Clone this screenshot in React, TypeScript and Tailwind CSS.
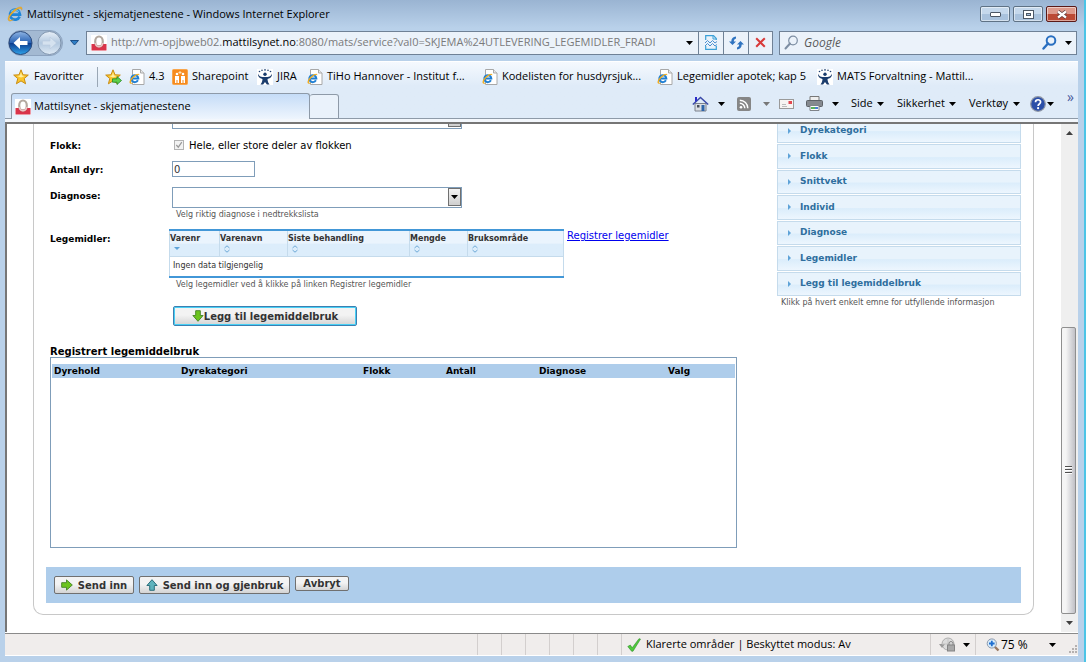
import React from "react";

const ui = "font-['Open_Sans','Noto_Sans',sans-serif]";

function Caret({ className = "text-black" }: { className?: string }) {
  return (
    <svg width="7" height="4" viewBox="0 0 7 4" className={`shrink-0 ${className}`} aria-hidden="true">
      <path d="M0 0h7L3.5 4z" fill="currentColor" />
    </svg>
  );
}

function Explorer() {
  return (
    <svg width="16" height="16" viewBox="0 0 16 16" aria-hidden="true" className="shrink-0">
      <path d="M12.6 10.6A5 5 0 1 1 13 8.6H4.2" fill="none" stroke="#1f86d8" strokeWidth="2.7" />
      <path d="M4 5.6A5 5 0 0 1 12 6" fill="none" stroke="#6cc0f2" strokeWidth="1.2" />
      <path d="M1.600 14.600C-.8 12 4.500 5 10 2c4-2 6-1 4.600 2.200C15 2 12.500 2 9.500 4 4.500 7.200 1 12.600 2.600 14c1 .8 2.800 0 4-.7-2 1.600-4 2.300-5 1.300z" fill="#f3b323" stroke="#d8921a" strokeWidth=".4" />
    </svg>
  );
}

function PageIcon() {
  return (
    <svg width="16" height="16" viewBox="0 0 16 16" aria-hidden="true" className="shrink-0">
      <path d="M3.500.5h8l3.500 3.500v11.500H3.500z" fill="#fff" stroke="#a8a8a8" />
      <path d="M11.500.5V4H15" fill="#e8e8e8" stroke="#a8a8a8" />
      <path d="M8.900 11.300A3.500 3.500 0 1 1 9.300 9.400H3" fill="none" stroke="#1f7fd4" strokeWidth="2" />
      <path d="M.8 14.300C-.6 12 3.500 7 7 5.300c2.600-1.300 3.900-.6 3 1.400 0-1.200-1.400-1-3 0C4 8.400 1.300 12.400 2 13.600c.5.800 1.700.3 2.500-.1-1.300 1.100-3 1.700-3.700.8z" fill="#f0ab1c" />
    </svg>
  );
}

function Padlock() {
  return (
    <svg width="16" height="16" viewBox="0 0 16 16" aria-hidden="true" className="shrink-0">
      <path d="M0 0h16v16H0z" fill="#fff" />
      <path d="M.5 9h4a4 3.500 0 0 0 7 0h4v6.500H.5z" fill="#d9344a" />
      <ellipse cx="8" cy="6.500" rx="3.800" ry="5" fill="none" stroke="#b3a9a0" strokeWidth="2.200" />
      <path d="M4.300 8c.5 3 2 3.700 3.700 3.700s3.200-.7 3.700-3.700" fill="none" stroke="#f0c4c4" strokeWidth="1.500" />
    </svg>
  );
}

function Star({ arrow = false }: { arrow?: boolean }) {
  return (
    <svg width="17" height="16" viewBox="0 0 17 16" aria-hidden="true" className="shrink-0">
      <path d="M8 .8l2 5 5.300.3-4.100 3.400 1.400 5.300L8 11.900l-4.600 2.900 1.400-5.300L.7 6.100 6 5.800z" fill="#fbc62d" stroke="#c98d14" strokeLinejoin="round" />
      <path d="M8 3l1 3.500 3 .4-4 1.600-4-1.600 3-.4z" fill="#fff0a0" />
      {arrow && <path d="M7.500 9.800H12V7.500l4.500 4-4.500 4v-2.300H7.500z" fill="#5fd04a" stroke="#23872a" strokeWidth=".8" />}
    </svg>
  );
}

function Sharepoint() {
  return (
    <svg width="16" height="16" viewBox="0 0 16 16" aria-hidden="true" className="shrink-0">
      <rect x=".5" y=".5" width="15" height="15" rx="1" fill="#f68b1f" stroke="#f8a64d" />
      <path d="M3 7h4v7H5.500v-3h-1v3H3zM9 7h4v7h-1.500v-3h-1v3H9z" fill="#fff" />
      <circle cx="5" cy="5" r="1.300" fill="#fff" />
      <circle cx="11" cy="5" r="1.300" fill="#fff" />
      <path d="M8 2v3M6.500 3.500h3" stroke="#ffe1b8" />
    </svg>
  );
}

function Jira() {
  return (
    <svg width="16" height="16" viewBox="0 0 16 16" aria-hidden="true" className="shrink-0">
      <path d="M0 0h16v16H0z" fill="#fff" />
      <g fill="#1b3d6d">
        <circle cx="8" cy="5.200" r="1.700" />
        <path d="M1 4.500c1 3 3 3.500 7 3.500s6-.5 7-3.500c.3 3-1.500 5-4.500 5.500.2 2.500.8 4 2 5.500h-2.600L8 13l-1.900 2.500H3.500c1.200-1.500 1.800-3 2-5.500C2.500 9.500.7 7.500 1 4.500z" />
        <circle cx="2.500" cy="2.500" r=".8" />
        <circle cx="5" cy="1.200" r=".8" />
        <circle cx="8" cy=".9" r=".8" />
        <circle cx="11" cy="1.200" r=".8" />
        <circle cx="13.500" cy="2.500" r=".8" />
      </g>
    </svg>
  );
}

function Magnifier({ className, thin = false }: { className: string; thin?: boolean }) {
  return (
    <svg width="15" height="15" viewBox="0 0 15 15" aria-hidden="true" className={className}>
      <g fill="none" stroke="currentColor">
        <circle cx="9" cy="5.500" r="4.300" strokeWidth={thin ? 1.2 : 2} />
        <path d="M6 8.500L1.500 13.500" strokeWidth={thin ? 2 : 2.4} strokeLinecap="round" />
      </g>
    </svg>
  );
}

function TitleBar() {
  const btn = "flex h-4 items-center justify-center rounded-[2px] border shadow-[inset_0_0_0_1px_rgba(255,255,255,.5)]";
  const blue = "w-[30px] border-[#5f7285] bg-linear-to-b from-[#c5d8ec] from-50% to-[#a9c2dd] to-50%";
  return (
    <header className="flex h-7 shrink-0 items-center pr-px pl-[2px]">
      <Explorer />
      <h1 className="ml-1 flex-1 text-[11px] text-black">Mattilsynet - skjematjenestene - Windows Internet Explorer</h1>
      <div className="flex gap-[3px]">
        <button aria-label="Minimer" className={`${btn} ${blue}`}>
          <svg width="11" height="5" viewBox="0 0 11 5"><rect x=".5" y=".5" width="10" height="4" rx=".5" fill="#fff" stroke="#4c5765" /></svg>
        </button>
        <button aria-label="Maksimer" className={`${btn} ${blue}`}>
          <svg width="11" height="9" viewBox="0 0 11 9"><rect x=".5" y=".5" width="10" height="8" fill="#fff" stroke="#4c5765" /><rect x="3.500" y="3.500" width="4" height="2" fill="#a9c2dd" stroke="#4c5765" /></svg>
        </button>
        <button aria-label="Lukk" className={`${btn} w-[31px] border-[#5a1a18] bg-linear-to-b from-[#dd9a8c] from-50% to-[#bb4a35] to-50%`}>
          <svg width="12" height="9" viewBox="0 0 12 9"><path d="M2 1.500l8 6M10 1.500l-8 6" stroke="#5c3a3a" strokeWidth="3.800" /><path d="M2 1.500l8 6M10 1.500l-8 6" stroke="#fff" strokeWidth="2.200" /></svg>
        </button>
      </div>
    </header>
  );
}

function NavBar() {
  return (
    <nav className="flex h-[33px] shrink-0 items-center pr-px pb-1 pl-[3px]">
      <svg width="55" height="28" viewBox="0 0 55 28" className="shrink-0" aria-hidden="true">
        <defs>
          <linearGradient id="back" x1="0" y1="0" x2="0" y2="1">
            <stop offset="0" stopColor="#8fb5e4" />
            <stop offset=".48" stopColor="#2a63b4" />
            <stop offset=".5" stopColor="#0b3a8c" />
            <stop offset="1" stopColor="#2fa3ea" />
          </linearGradient>
          <linearGradient id="fwd" x1="0" y1="0" x2="0" y2="1">
            <stop offset="0" stopColor="#e9f0f8" />
            <stop offset=".5" stopColor="#b2c8df" />
            <stop offset="1" stopColor="#dfeaf5" />
          </linearGradient>
        </defs>
        <path d="M13 1.500h29a12.500 12.500 0 0 1 0 25H13a12.500 12.500 0 0 1 0-25z" fill="#a3b9d2" stroke="#8da3bf" />
        <circle cx="12.500" cy="14" r="11.500" fill="url(#back)" stroke="#2b4a7c" />
        <circle cx="41.500" cy="14" r="11.500" fill="url(#fwd)" stroke="#7e93ad" />
        <path d="M5.500 14L12 8v4h7.500v4H12v4z" fill="#fff" />
        <path d="M48.500 14L42 8v4h-7.500v4H42v4z" fill="#d5e2ef" stroke="#b8cade" strokeWidth=".6" />
      </svg>
      <button aria-label="Nylige sider" className="flex w-[23px] shrink-0 justify-center">
        <svg width="9" height="6" viewBox="0 0 9 6"><path d="M.5.5h8L4.500 5z" fill="#2f7fc6" stroke="#1b4d86" /></svg>
      </button>
      <div className="flex h-6 min-w-0 flex-1 border border-[#6f8196] bg-[#ebf2fa]">
        <div className="flex min-w-0 flex-1 items-center pr-[5px] pl-1">
          <Padlock />
          <p className="ml-1 min-w-0 flex-1 overflow-hidden text-[11px] whitespace-nowrap text-[#7a7a7a]">
            http://vm-opjbweb02.<span className="text-black">mattilsynet.no</span>:8080/mats/service?val0=SKJEMA%24UTLEVERING_LEGEMIDLER_FRADI
          </p>
          <span className="w-2" />
          <Caret />
        </div>
        <button aria-label="Kompatibilitetsvisning" className="flex w-[25px] shrink-0 items-center justify-center border-l border-[#6f8196]">
          <svg width="12" height="15" viewBox="0 0 12 15"><path d="M.7 5V.7h7.800l2.800 2.800V5M.7 11v3.300h10.600V11" fill="none" stroke="#3aa0d8" strokeWidth="1.200" /><path d="M8 1v3h3" fill="none" stroke="#3aa0d8" /><path d="M0 8l2.500-2.500L5 8l2.500-2.500L10 8l2-1.500M0 11l2.500-2.500L5 11l2.500-2.500L10 11l2-1.500" fill="none" stroke="#4a8fd0" /></svg>
        </button>
        <button aria-label="Oppdater" className="flex w-[25px] shrink-0 items-center justify-center border-l border-[#6f8196]">
          <svg width="15" height="14" viewBox="0 0 15 14" fill="#2f73c0"><path d="M0 5.500L3.500 9 7 5.500H4.800C4.800 3.800 5.600 3 7 2.500V.5C4 .8 2.300 2.500 2.300 5.500z" /><path d="M15 8.500L11.500 5 8 8.500h2.200c0 1.700-.8 2.500-2.200 3v2c3-.3 4.700-2 4.700-5z" /></svg>
        </button>
        <button aria-label="Stopp" className="flex w-6 shrink-0 items-center justify-center border-l border-[#6f8196]">
          <svg width="11" height="11" viewBox="0 0 11 11"><path d="M1.200 1.200l8.600 8.600M9.800 1.200L1.200 9.800" stroke="#d83a3a" strokeWidth="2" /></svg>
        </button>
      </div>
      <div className="ml-[6px] flex h-6 w-[298px] shrink-0 items-center border border-[#6f8196] bg-[#ebf2fa] pr-1 pl-1">
        <Magnifier thin className="shrink-0 text-[#7d8ea3]" />
        <input aria-label="Søk" placeholder="Google" className="ml-[5px] min-w-0 flex-1 bg-transparent text-xs italic outline-none placeholder:text-[#5a5a5a]" />
        <button aria-label="Søk nå"><Magnifier className="text-[#2a6fc0]" /></button>
        <span className="w-2" />
        <Caret />
      </div>
    </nav>
  );
}

const favourites = [
  { label: "4.3", icon: <PageIcon />, width: "w-[43px]" },
  { label: "Sharepoint", icon: <Sharepoint />, width: "w-[85px]" },
  { label: "JIRA", icon: <Jira />, width: "w-[50px]" },
  { label: "TiHo Hannover - Institut f...", icon: <PageIcon />, width: "w-[175px]" },
  { label: "Kodelisten for husdyrsjuk...", icon: <PageIcon />, width: "w-[175px]" },
  { label: "Legemidler apotek; kap 5", icon: <PageIcon />, width: "w-[160px]" },
  { label: "MATS Forvaltning - Mattil...", icon: <Jira />, width: "w-[170px]" },
];

function Favourites() {
  return (
    <div className="flex h-[29px] shrink-0 items-center pl-2 text-[11px] whitespace-nowrap">
      <button className="flex w-[84px] items-center gap-1"><Star />Favoritter</button>
      <span className="h-5 w-px bg-[#9aa7b5]" />
      <button aria-label="Legg til i favoritter" className="ml-[7px] w-6"><Star arrow /></button>
      {favourites.map((f) => (
        <a key={f.label} href="#" className={`flex shrink-0 items-center gap-1 ${f.width}`}>{f.icon}{f.label}</a>
      ))}
    </div>
  );
}

function Commands() {
  return (
    <div className="flex flex-1 items-center justify-end border-b border-[#8e9aa8] pr-1 pb-[2px] text-[11px]">
      <button aria-label="Hjem" className="flex w-[45px] items-center gap-[9px]">
        <svg width="17" height="16" viewBox="0 0 17 16"><path d="M3 7.500h11V15H3z" fill="#d9dde3" stroke="#7c828c" /><path d="M.8 8.500L8.500 1.500l7.700 7" fill="none" stroke="#3a49a8" strokeWidth="1.500" /><path d="M3 1h2v3.500L3 6z" fill="#2b2bc8" /><path d="M9.500 9h3v6h-3z" fill="#2e64a8" /><path d="M5 9h2.500v2.500H5z" fill="#444c58" /></svg>
        <Caret />
      </button>
      <button aria-label="Feeder" className="flex w-[42px] items-center gap-3">
        <svg width="14" height="14" viewBox="0 0 14 14"><rect width="14" height="14" rx="2" fill="#868686" /><circle cx="4" cy="10.200" r="1.300" fill="#fff" /><path d="M2.800 6.200a5 5 0 0 1 5 5M2.800 3.200a8 8 0 0 1 8 8" fill="none" stroke="#fff" strokeWidth="1.400" /></svg>
        <Caret className="text-[#777]" />
      </button>
      <button aria-label="Les e-post" className="w-[27px]">
        <svg width="15" height="10" viewBox="0 0 15 10"><rect x=".5" y=".5" width="14" height="9" fill="#f7f4f2" stroke="#9a9a9a" /><path d="M9.500 2h3.500v3H9.500z" fill="#e2474f" /><path d="M3 5.500h4M3 7.500h5" stroke="#bbb" /></svg>
      </button>
      <button aria-label="Skriv ut" className="flex w-[45px] items-center gap-[9px]">
        <svg width="17" height="15" viewBox="0 0 17 15"><path d="M4 .5h9V5H4z" fill="#eee" stroke="#777" /><rect x=".5" y="4.500" width="16" height="6" rx="1" fill="#85898f" stroke="#5d6167" /><path d="M4 9.500h9v5H4z" fill="#fff" stroke="#7f8389" /><path d="M5 11h4v2H5z" fill="#58b25c" /><path d="M9 11h3v2H9z" fill="#4b7fd1" /></svg>
        <Caret />
      </button>
      <button className="flex w-[46px] items-center justify-between pr-[13px]">Side<Caret /></button>
      <button className="flex w-[72px] items-center justify-between pr-[13px]">Sikkerhet<Caret /></button>
      <button className="flex w-[61px] items-center justify-between pr-[10px]">Verktøy<Caret /></button>
      <button aria-label="Hjelp" className="flex w-[37px] items-center gap-px">
        <svg width="16" height="16" viewBox="0 0 16 16"><circle cx="8" cy="8" r="7.300" fill="#2b4fa8" stroke="#8f97a6" strokeWidth="1.200" /><path d="M5.500 6.200C5.500 3 10.600 3 10.600 6c0 2-2.500 1.900-2.500 3.900" fill="none" stroke="#fff" strokeWidth="1.700" /><circle cx="8.100" cy="12.200" r="1.100" fill="#fff" /></svg>
        <Caret />
      </button>
      <button aria-label="Flere verktøy" className="self-start text-sm leading-[12px] text-[#4a5a9c]">»</button>
    </div>
  );
}

function Tabs() {
  return (
    <div className="flex h-7 shrink-0">
      <div className="w-[6px] border-b border-[#8e9aa8]" />
      <a href="#" className="mt-[2px] flex w-[299px] items-center gap-[3px] rounded-t-[3px] border border-b-0 border-[#8e9aa8] bg-linear-to-b from-[#c5dcf7] to-[#eef5fd] pl-[3px] text-[11px]">
        <Padlock />
        Mattilsynet - skjematjenestene
      </a>
      <button aria-label="Ny fane" className="mt-[3px] w-[29px] rounded-t-[3px] border border-l-0 border-[#8e9aa8] bg-[#eaf2fb]" />
      <Commands />
    </div>
  );
}

const labelCls = "w-[122px] shrink-0 text-[9px] font-bold text-black";
const hintCls = "text-[8px] leading-[14px] text-[#555]";

function DropDown({ id, label }: { id: string; label: string }) {
  return (
    <div className="relative h-[21px] w-[290px] shrink-0">
      <select id={id} aria-label={label} className="block h-full w-full appearance-none rounded-none border border-[#7f9db9] bg-white px-1 text-[10px]">
        <option></option>
      </select>
      <span className="pointer-events-none absolute top-px right-px flex h-[18px] w-[13px] items-center justify-center border border-[#707070] bg-linear-to-b from-[#f4f4f4] to-[#cfcfcf]">
        <Caret />
      </span>
    </div>
  );
}

function SortMark({ down = false }: { down?: boolean }) {
  return (
    <svg width="6" height="8" viewBox="0 0 6 8" className="ml-1 block" aria-hidden="true">
      {down ? (
        <path d="M0 2h6L3 5z" fill="#5fa3d8" />
      ) : (
        <path d="M.5 3L3 .8 5.500 3M.5 5L3 7.200 5.500 5" fill="none" stroke="#6da8d6" />
      )}
    </svg>
  );
}

const medColumns = [
  { name: "Varenr", width: "w-[50px]" },
  { name: "Varenavn", width: "w-[68px]" },
  { name: "Siste behandling", width: "w-[122px]" },
  { name: "Mengde", width: "w-[58px]" },
  { name: "Bruksområde", width: "w-[96px]" },
];

function MedicineTable() {
  return (
    <table className="w-[394px] table-fixed border-collapse border-y-2 border-[#4297d7]">
      <thead>
        <tr className="bg-linear-to-b from-[#eaf4fd] from-50% to-[#dcedfb] to-55%">
          {medColumns.map((c, i) => (
            <th key={c.name} className={`h-[26px] border border-t-0 border-[#c5dbec] p-0 pt-px text-left align-top text-[8px] leading-[13px] text-[#333] ${c.width}`}>
              {c.name}
              <SortMark down={i === 0} />
            </th>
          ))}
        </tr>
      </thead>
      <tbody>
        <tr>
          <td colSpan={5} className="h-[21px] border-x border-[#c5dbec] pl-[3px] text-[8px] leading-[14px] text-[#333]">Ingen data tilgjengelig</td>
        </tr>
      </tbody>
    </table>
  );
}

function Arrow({ dir }: { dir: "down" | "right" | "up" }) {
  const turn = { down: 90, right: 0, up: -90 }[dir];
  const up = dir === "up";
  return (
    <svg width="12" height="12" viewBox="0 0 12 12" aria-hidden="true" className="shrink-0">
      <path transform={`rotate(${turn} 6 6)`} d="M.7 3.700H5.500V.9L11.300 6 5.500 11.100V8.300H.7z" fill={up ? "#5fb3bd" : "#6cc51d"} stroke={up ? "#2c6f7c" : "#4d8a2c"} />
    </svg>
  );
}

const grey = "flex items-center justify-center rounded-[2px] border border-[#707070] bg-linear-to-b from-[#f3f3f3] from-45% to-[#d4d4d4] text-[10px] font-bold text-[#333]";

const regColumns = [
  { name: "Dyrehold", width: "w-[127px]" },
  { name: "Dyrekategori", width: "w-[182px]" },
  { name: "Flokk", width: "w-[83px]" },
  { name: "Antall", width: "w-[93px]" },
  { name: "Diagnose", width: "w-[129px]" },
  { name: "Valg", width: "w-auto" },
];

function Form() {
  return (
    <form className="min-w-0 flex-1" onSubmit={(e) => e.preventDefault()}>
      <div className="flex h-[5px] items-end overflow-hidden pl-[122px]">
        <DropDown id="kategori" label="Dyrekategori" />
      </div>
      <div className="mt-1 flex h-6 items-center">
        <span className={`${labelCls} pt-[3px]`}>Flokk:</span>
        <label className="flex items-center gap-[5px] pl-[2px] text-[10px] text-black">
          <span className="relative flex h-[10px] w-[10px]">
            <input type="checkbox" checked disabled readOnly className="h-[10px] w-[10px] appearance-none border border-[#b3b3b3] bg-[#f2f2f2]" />
            <svg width="10" height="10" viewBox="0 0 10 10" className="pointer-events-none absolute inset-0"><path d="M2.300 5l2 2.200 3.500-5" fill="none" stroke="#999" strokeWidth="1.200" /></svg>
          </span>
          Hele, eller store deler av flokken
        </label>
      </div>
      <div className="flex h-6 items-center">
        <label htmlFor="antall" className={`${labelCls} pt-[3px]`}>Antall dyr:</label>
        <input id="antall" defaultValue="0" className="h-4 w-[83px] border border-[#7f9db9] bg-white px-px text-[10px] text-[#333]" />
      </div>
      <div className="mt-[6px] flex">
        <label htmlFor="diagnose" className={`${labelCls} leading-[18px]`}>Diagnose:</label>
        <div>
          <DropDown id="diagnose" label="Diagnose" />
          <p className={`${hintCls} pl-1`}>Velg riktig diagnose i nedtrekkslista</p>
        </div>
      </div>
      <div className="mt-[7px] flex">
        <span className={`${labelCls} leading-[20px]`}>Legemidler:</span>
        <div className="-ml-[3px]">
          <MedicineTable />
          <p className={`${hintCls} pl-[7px]`}>Velg legemidler ved å klikke på linken Registrer legemidler</p>
          <button className="mt-[14px] ml-1 flex h-5 w-[184px] items-center justify-center rounded-[2px] border border-[#3c7fb1] bg-linear-to-b from-[#f3f3f3] from-45% to-[#d4d4d4] text-[10px] font-bold text-[#333] shadow-[inset_0_0_0_1px_#48d0f5]">
            <Arrow dir="down" />
            Legg til legemiddelbruk
          </button>
        </div>
        <a href="#" className="ml-[3px] self-start text-[10px] leading-[14px] text-[#0000ee] underline">Registrer legemidler</a>
      </div>
      <h2 className="mt-5 text-[10px] leading-[11px] font-bold text-black">Registrert legemiddelbruk</h2>
      <div className="h-[191px] border border-[#7f9db9] px-px pt-[6px]">
        <table className="w-full table-fixed border-collapse">
          <thead>
            <tr className="bg-[#aecdeb]">
              {regColumns.map((c) => (
                <th key={c.name} className={`h-[14px] pl-[2px] text-left text-[9px] leading-[14px] text-black ${c.width}`}>{c.name}</th>
              ))}
            </tr>
          </thead>
        </table>
      </div>
    </form>
  );
}

const itemCls = "flex w-full items-center border border-[#c5dbec] bg-linear-to-b from-[#e8f3fc] from-50% via-[#dbedfb] via-55% to-[#edf6fe] pl-[10px] text-[9px] font-bold text-[#2e6e9e]";

function ItemMark() {
  return (
    <svg width="3" height="6" viewBox="0 0 3 6" className="mr-[9px] shrink-0" aria-hidden="true">
      <path d="M0 0l3 3-3 3z" fill="#5fa3d8" />
    </svg>
  );
}

function Sidebar() {
  return (
    <aside className="w-[244px] shrink-0">
      <div className="flex h-[19px] items-end overflow-hidden">
        <button className={`${itemCls} h-[25px] shrink-0`}><ItemMark />Dyrekategori</button>
      </div>
      <ul className="mt-px flex h-[152px] flex-col gap-px">
        {["Flokk", "Snittvekt", "Individ", "Diagnose", "Legemidler", "Legg til legemiddelbruk"].map((t) => (
          <li key={t} className="flex flex-1">
            <button className={itemCls}><ItemMark />{t}</button>
          </li>
        ))}
      </ul>
      <p className={`${hintCls} pl-1`}>Klikk på hvert enkelt emne for utfyllende informasjon</p>
    </aside>
  );
}

function ScrollBar() {
  return (
    <div className="flex w-[17px] shrink-0 flex-col bg-[#efefef]" aria-hidden="true">
      <div className="flex h-[17px] items-center justify-center">
        <svg width="7" height="4" viewBox="0 0 7 4"><path d="M0 4h7L3.500 0z" fill="#404040" /></svg>
      </div>
      <div className="grow-[186]" />
      <div className="mr-[2px] flex grow-[286] basis-0 items-center justify-center rounded-[2px] border border-[#8f8f8f] bg-linear-to-r from-[#f5f5f5] from-30% to-[#c0c0c6]">
        <svg width="8" height="9" viewBox="0 0 8 9"><path d="M0 .5h7M0 3.500h7M0 6.500h7" stroke="#4f4f4f" /><path d="M0 1.500h7M0 4.500h7M0 7.500h7" stroke="#fff" /></svg>
      </div>
      <div className="flex h-[18px] items-center justify-center"><Caret className="text-[#404040]" /></div>
    </div>
  );
}

function StatusBar() {
  const cell = "border-l border-[#d3cfce]";
  return (
    <footer className="flex h-[22px] shrink-0 border-b border-white bg-[#f0edec] text-[11px] text-black">
      <div className="flex-1" />
      {[0, 1, 2, 3, 4, 5].map((n) => <div key={n} className={`${cell} w-6`} />)}
      <div className={`${cell} flex w-[309px] items-center gap-[5px] pl-[5px]`}>
        <svg width="14" height="14" viewBox="0 0 14 14"><path d="M.8 8.500l2.500-1.500 1.900 2.800L12 .7l1.500.4L6 13.200H4.600z" fill="#4fc93c" stroke="#2f8f2a" strokeWidth=".6" /></svg>
        Klarerte områder | Beskyttet modus: Av
      </div>
      <div className={`${cell} flex w-[45px] items-center gap-[7px] pl-2`}>
        <svg width="17" height="15" viewBox="0 0 17 15"><circle cx="9" cy="7" r="6" fill="#dcdcdc" stroke="#adadad" /><path d="M0 7h6L3 11z" fill="#9a9a9a" /><path d="M9 1v12M3 7h12" stroke="#c4c4c4" /><rect x="8.500" y="8" width="7" height="6" fill="#a8a8a8" stroke="#848484" /><path d="M10 8V6.500a2 2 0 0 1 4 0V8" fill="none" stroke="#848484" /></svg>
        <Caret />
      </div>
      <div className={`${cell} flex w-[91px] items-center pl-[10px]`}>
        <svg width="14" height="14" viewBox="0 0 14 14"><path d="M8.500 8.500l4 4" stroke="#9a7a62" strokeWidth="2.400" /><circle cx="5.800" cy="5.500" r="4.600" fill="#d8ecfb" stroke="#8b98ab" /><path d="M5.800 2.700v5.600M3 5.500h5.600" stroke="#1f6fd0" strokeWidth="1.800" /></svg>
        <span className="ml-px flex-1 text-xs">75 %</span>
        <Caret />
        <span className="w-[10px]" />
      </div>
      <div className="flex w-[12px] items-end justify-end pb-px">
        <svg width="9" height="9" viewBox="0 0 9 9" fill="#b5b1b0"><path d="M6 0h2v2H6zM3 3h2v2H3zM6 3h2v2H6zM0 6h2v2H0zM3 6h2v2H3zM6 6h2v2H6z" /></svg>
      </div>
    </footer>
  );
}

export default function App() {
  return (
    <div className={`flex min-h-screen flex-col border-r-2 border-[#4cc4e6] bg-[#b9d1ea] bg-linear-to-b from-[#9ab4d2] to-[#b9d1ea] to-[28px] pr-[6px] pb-[6px] pl-[5px] text-black ${ui}`}>
      <TitleBar />
      <NavBar />
      <div className="flex flex-1 flex-col border-t border-white">
        <div className="flex shrink-0 flex-col bg-linear-to-b from-[#f5f9fe] to-[#dfebf8] to-40%">
          <Favourites />
          <Tabs />
          <div className="h-[3px] bg-[#f3f7fc]" />
        </div>
        <div className="flex flex-1 border-t-2 border-l-2 border-[#767676] bg-white font-['DejaVu_Sans',Verdana,sans-serif]">
          <main className="min-w-0 flex-1 pb-4">
            <div className="mr-[27px] ml-[26px] rounded-b-[10px] border border-t-0 border-[#c8c8c8] px-3 pb-[11px]">
              <div className="flex gap-10 pl-1">
                <Form />
                <Sidebar />
              </div>
              <div className="mt-[19px] flex h-9 items-start gap-[5px] bg-[#aecdeb] pt-[9px] pl-2">
                <button className={`${grey} h-[18px] w-20 gap-[5px]`}><Arrow dir="right" />Send inn</button>
                <button className={`${grey} h-[18px] w-[151px] gap-[5px]`}><Arrow dir="up" />Send inn og gjenbruk</button>
                <button className={`${grey} h-[15px] w-[54px]`}>Avbryt</button>
              </div>
            </div>
          </main>
          <ScrollBar />
        </div>
        <div className="h-[2px] shrink-0 border-b border-[#8a8a8a] bg-white" />
        <StatusBar />
      </div>
    </div>
  );
}
